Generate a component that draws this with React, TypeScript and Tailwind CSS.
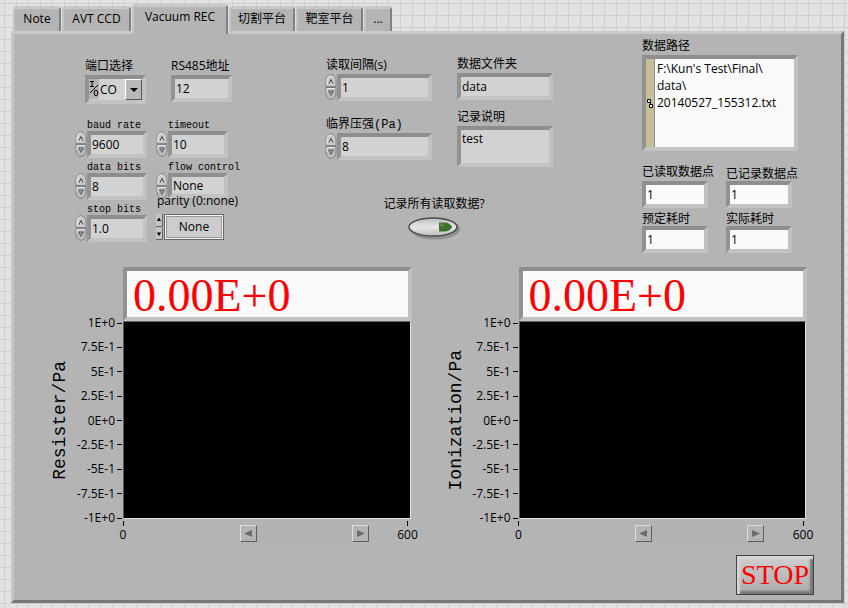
import { ReactNode } from "react";

const UI = "font-['Open_Sans','Noto_Sans_CJK_SC',sans-serif] text-[12px]";
const MONO = "font-['Liberation_Mono','Noto_Sans_CJK_SC',monospace]";
const WELL =
  "min-w-0 rounded-none border-4 border-t-[#8e8e8e] border-l-[#929292] border-r-[#c1c1c1] border-b-[#c3c3c3] text-black outline-none";

const TABS = [
  { name: "Note", width: "w-12" },
  { name: "AVT CCD", width: "w-[69px]" },
  { name: "Vacuum REC", width: "w-24" },
  { name: "切割平台", width: "w-[66px]" },
  { name: "靶室平台", width: "w-[67px]" },
  { name: "...", width: "w-7" },
];

const Y_TICKS = ["1E+0", "7.5E-1", "5E-1", "2.5E-1", "0E+0", "-2.5E-1", "-5E-1", "-7.5E-1", "-1E+0"];

function TabBar() {
  return (
    <div role="tablist" className="flex h-[31px] items-end gap-px pl-0.5">
      {TABS.map((tab) => {
        const active = tab.name === "Vacuum REC";
        return (
          <button
            key={tab.name}
            role="tab"
            aria-selected={active}
            className={`${tab.width} shrink-0 rounded-t-[3px] border-t-[3px] border-r-2 border-l-2 border-t-[#c9c9c9] border-r-[#808080] border-l-[#c4c4c4] bg-[#b4b4b4] text-center text-[12px] whitespace-nowrap ${
              active ? "relative z-10 -mb-[3px] h-[30px] pb-2" : "h-[25px] pb-0.5"
            }`}
          >
            {tab.name}
          </button>
        );
      })}
    </div>
  );
}

function Spinner({ name }: { name: string }) {
  return (
    <span className="flex w-3 shrink-0 flex-col items-center">
      <button aria-label={`${name} up`} className="h-[13px] w-3">
        <svg viewBox="0 0 12 13" className="block h-full w-full">
          <path d="M1 12.500V7C1 3 3.500.8 6 .8S11 3 11 7v5.500Z" fill="#c9c9c9" stroke="#858585" />
          <path d="M2 11V7C2 4 4 2 6 2" fill="none" stroke="#efefef" />
          <path d="M4 9.500 6 5.500l2 4" fill="none" stroke="#444" />
        </svg>
      </button>
      <button aria-label={`${name} down`} className="h-[13px] w-3">
        <svg viewBox="0 0 12 13" className="block h-full w-full">
          <path d="M1 .5V6c0 4 2.500 6.200 5 6.200S11 10 11 6V.5Z" fill="#bcbcbc" stroke="#7d7d7d" />
          <path d="M2 6V1.500h8" fill="none" stroke="#e8e8e8" />
          <path d="M3.500 4h5L6 8.500Z" fill="#999" stroke="#555" strokeWidth=".8" />
        </svg>
      </button>
    </span>
  );
}

type FieldProps = {
  id: string;
  label: string;
  value: string;
  labelClass?: string;
  inputClass?: string;
};

function SpinField({ id, label, value, labelClass = "", inputClass = "h-[27px]" }: FieldProps) {
  return (
    <div>
      <label htmlFor={id} className={`block whitespace-nowrap ${labelClass}`}>
        {label}
      </label>
      <div className="flex">
        <Spinner name={label} />
        <input id={id} defaultValue={value} className={`${WELL} flex-1 bg-[#d2d2d2] pl-px ${inputClass}`} />
      </div>
    </div>
  );
}

function TextField({ id, label, value, labelClass = "", inputClass = "" }: FieldProps) {
  return (
    <div>
      <label htmlFor={id} className={`block whitespace-nowrap ${labelClass}`}>
        {label}
      </label>
      <input id={id} defaultValue={value} className={`${WELL} block h-[27px] pl-px ${inputClass}`} />
    </div>
  );
}

const SERIAL_LABEL = `${MONO} h-[14px] pl-3 text-[10px] leading-[18px]`;

function SerialSettings() {
  return (
    <div className="flex w-[166px] gap-[9px] pt-[22px]">
      <div className="flex w-[72px] shrink-0 flex-col gap-px">
        <div className="mb-3 pl-[10px]">
          <label htmlFor="port" className="block leading-[19px]">
            端口选择
          </label>
          <div className={`${WELL} flex h-[29px] w-[61px] bg-[#d2d2d2]`}>
            <svg viewBox="0 0 10 20" className="h-[20px] w-[10px] shrink-0 bg-[#b4b4b4]">
              <path d="M1 2.500h4M3 2.500v5M1 7.500h4M1 14 9 6" fill="none" stroke="#000" />
              <ellipse cx="7" cy="14" rx="1.800" ry="2.800" fill="none" stroke="#000" />
            </svg>
            <select id="port" className="min-w-0 flex-1 appearance-none pl-px outline-none">
              <option>CO</option>
            </select>
            <span className="pointer-events-none flex w-[17px] shrink-0 items-center justify-center border border-t-white border-r-[#555] border-b-[#555] border-l-white bg-[#b8b8b8]">
              <svg viewBox="0 0 8 4" className="h-1 w-2">
                <path d="M0 0h8L4 4Z" />
              </svg>
            </span>
          </div>
        </div>
        <SpinField id="baud" label="baud rate" value="9600" labelClass={SERIAL_LABEL} />
        <SpinField id="data-bits" label="data bits" value="8" labelClass={SERIAL_LABEL} />
        <SpinField id="stop-bits" label="stop bits" value="1.0" labelClass={SERIAL_LABEL} />
      </div>
      <div className="flex w-[72px] shrink-0 flex-col gap-px">
        <div className="mb-3 h-12 pl-[15px]">
          <TextField
            id="address"
            label="RS485地址"
            value="12"
            labelClass="leading-[19px]"
            inputClass="w-[61px] bg-[#d2d2d2]"
          />
        </div>
        <SpinField id="timeout" label="timeout" value="10" labelClass={SERIAL_LABEL} />
        <SpinField id="flow" label="flow control" value="None" labelClass={SERIAL_LABEL} inputClass="h-[25px]" />
        <div>
          <label htmlFor="parity" className="-mt-2 mb-1 block pl-px leading-[18px] whitespace-nowrap">
            parity (0:none)
          </label>
          <div className="flex h-[26px] gap-px">
            <span className="flex w-[7px] flex-col gap-px">
              {["M1 7h5L3.500 3Z", "M1 4h5L3.500 8Z"].map((d, i) => (
                <button
                  key={d}
                  aria-label={i === 0 ? "parity up" : "parity down"}
                  className="flex-1 border-r border-b border-[#666] bg-[#c4c4c4]"
                >
                  <svg viewBox="0 0 7 11" className="block h-full w-full">
                    <path d={d} />
                  </svg>
                </button>
              ))}
            </span>
            <select
              id="parity"
              className="w-15 shrink-0 appearance-none rounded-none border border-[#666] bg-[#cdcdcd] text-center shadow-[inset_0_0_0_1px_#f5f5f5,inset_0_0_0_2px_#999] outline-none"
            >
              <option>None</option>
            </select>
          </div>
        </div>
      </div>
    </div>
  );
}

function RecordSettings() {
  return (
    <div className="w-[233px] pt-[21px]">
      <div className="flex gap-[25px]">
        <div className="flex w-[107px] flex-col gap-[13px]">
          <SpinField id="interval" label="读取间隔(s)" value="1" labelClass="pl-px leading-[19px]" />
          <SpinField
            id="threshold"
            label="临界压强(Pa)"
            value="8"
            labelClass={`${MONO} h-[19px] pl-px text-[12px] leading-[22px]`}
          />
        </div>
        <div className="flex w-[96px] flex-col gap-2">
          <TextField
            id="folder"
            label="数据文件夹"
            value="data"
            labelClass="leading-[18px]"
            inputClass="w-full bg-[#d2d2d2]"
          />
          <div>
            <label htmlFor="notes" className="block leading-[18px]">
              记录说明
            </label>
            <textarea
              id="notes"
              defaultValue="test"
              className={`${WELL} block h-[41px] w-full resize-none bg-[#d2d2d2] pl-px leading-[18px]`}
            />
          </div>
        </div>
      </div>
      <div className="mt-[27px] flex flex-col items-center pr-[15px]">
        <span id="record-all" className="leading-[20px]">
          记录所有读取数据?
        </span>
        <button aria-labelledby="record-all" aria-pressed="false">
          <svg viewBox="0 0 54 28" className="block h-7 w-[54px]">
            <defs>
              <linearGradient id="pill" x1="0" y1="0" x2="0" y2="1">
                <stop offset="0" stopColor="#bcbcbc" />
                <stop offset=".5" stopColor="#e6e6e6" />
                <stop offset="1" stopColor="#bebebe" />
              </linearGradient>
            </defs>
            <ellipse cx="28" cy="15" rx="25" ry="10.500" fill="#8f8f8f" />
            <ellipse cx="26" cy="13" rx="24" ry="9" fill="url(#pill)" stroke="#4a4a4a" strokeWidth="1.500" />
            <path d="M32 8.500h5c4 0 7 2 8 4.500-1 2.500-4 4.500-8 4.500h-5Z" fill="#3f6f2c" />
            <path d="M33 9.500h4v3h-4Z" fill="#5b8546" />
          </svg>
        </button>
      </div>
    </div>
  );
}

function Readouts() {
  const box = "w-[66px] bg-[#fafafa]";
  const tight = "h-[18px] leading-[22px]";
  return (
    <div className="w-[156px] pt-[3px]">
      <label htmlFor="path" className="block leading-[18px]">
        数据路径
      </label>
      <div className={`${WELL} flex h-24 bg-[#fafafa]`}>
        <span className="flex w-[9px] shrink-0 items-center border-r border-[#8e8e8e] bg-[#c3bf98]">
          <svg viewBox="0 0 8 10" className="h-[10px] w-2">
            <path d="M1.500 1.500h3v3h-3ZM3.500 6.500h3v3h-3ZM4.500 4v3" fill="#fff" stroke="#000" />
          </svg>
        </span>
        <textarea
          id="path"
          defaultValue={"F:\\Kun's Test\\Final\\\ndata\\\n20140527_155312.txt"}
          className="min-w-0 flex-1 resize-none overflow-hidden pt-px pl-0.5 leading-[17px] outline-none"
        />
      </div>
      <div className="mt-3 grid grid-cols-[66px_66px] gap-x-[18px]">
        <TextField id="read-count" label="已读取数据点" value="1" labelClass="leading-[18px]" inputClass={box} />
        <TextField id="saved-count" label="已记录数据点" value="1" labelClass={tight} inputClass={box} />
        <TextField id="planned" label="预定耗时" value="1" labelClass={tight} inputClass={box} />
        <TextField id="elapsed" label="实际耗时" value="1" labelClass={tight} inputClass={box} />
      </div>
    </div>
  );
}

function AxisEnd({ children }: { children: ReactNode }) {
  return (
    <span className="flex w-6 flex-col items-center pt-0.5">
      <span className="h-[5px] w-px bg-black" />
      <span className="leading-[18px]">{children}</span>
    </span>
  );
}

function ScrollButton({ name, d }: { name: string; d: string }) {
  return (
    <button
      aria-label={name}
      className="h-[17px] w-[17px] border border-t-[#dedede] border-r-[#5e5e5e] border-b-[#5e5e5e] border-l-[#dedede] bg-[#b4b4b4]"
    >
      <svg viewBox="0 0 15 15" className="block h-full w-full">
        <path d={d} fill="#6c6c6c" />
      </svg>
    </button>
  );
}

function Chart({ title }: { title: string }) {
  return (
    <section aria-label={title} className="grid grid-cols-[24px_51px_1fr]">
      <output
        className={`${WELL} col-start-3 -mr-px h-[54px] bg-[#fafafa] pl-1.5 font-['Liberation_Serif',serif] text-[46px] leading-[50px] whitespace-nowrap !text-[#ff0000]`}
      >
        0.00E+0
      </output>
      <div className="col-start-1 flex items-center justify-center">
        <span className={`${MONO} rotate-180 text-[18px] leading-6 [writing-mode:vertical-rl]`}>{title}</span>
      </div>
      <div className="-mt-[6px] -mb-[7px] flex flex-col justify-between">
        {Y_TICKS.map((tick) => (
          <span key={tick} className="flex items-center justify-end gap-0.5 pr-px leading-4">
            {tick}
            <span className="h-px w-[5px] bg-black" />
          </span>
        ))}
      </div>
      <div className="h-[198px] border border-t-[#666] border-r-[#e2e2e2] border-b-[#e2e2e2] border-l-[#555] bg-black" />
      <div className="col-start-3 -mr-[9px] -ml-3 flex">
        <AxisEnd>0</AxisEnd>
        <div className="mt-[6px] mr-[27px] ml-auto flex h-[17px] w-[129px] justify-between bg-[#b2b2b2]">
          <ScrollButton name="Scroll left" d="M3 7.500 11 4v7Z" />
          <ScrollButton name="Scroll right" d="M4 4 12 7.500 4 11Z" />
        </div>
        <AxisEnd>600</AxisEnd>
      </div>
    </section>
  );
}

export default function App() {
  return (
    <main
      className={`${UI} flex min-h-screen flex-col bg-[#e2e2e2] bg-[linear-gradient(to_right,#cfcfcf_1px,transparent_1px),linear-gradient(to_bottom,#cfcfcf_1px,transparent_1px)] bg-[size:12px_12px] bg-[position:4px_3px] pr-1 pb-[5px] pl-[11px] text-black`}
    >
      <TabBar />
      <div className="flex flex-1 flex-col border-[3px] border-t-[#c9c9c9] border-r-[#777] border-b-[#777] border-l-[#c6c6c6] bg-[#b4b4b4]">
        <div className="flex justify-between pr-[43px] pl-[61px]">
          <SerialSettings />
          <RecordSettings />
          <Readouts />
        </div>
        <div className="mt-[14px] grid grid-cols-2 gap-[33px] pr-[35px] pl-[34px]">
          <Chart title="Resister/Pa" />
          <Chart title="Ionization/Pa" />
        </div>
        <div className="mt-[11px] flex justify-end pr-[27px]">
          <button className="h-10 w-[78px] border border-[#444] bg-linear-to-b from-[#d0d0d0] to-[#aaa] text-center font-['Liberation_Serif',serif] text-[28px] leading-[36px] text-[#ff0000] shadow-[inset_3px_3px_2px_#d6d6d6,inset_-3px_-3px_2px_#777]">
            STOP
          </button>
        </div>
      </div>
    </main>
  );
}
